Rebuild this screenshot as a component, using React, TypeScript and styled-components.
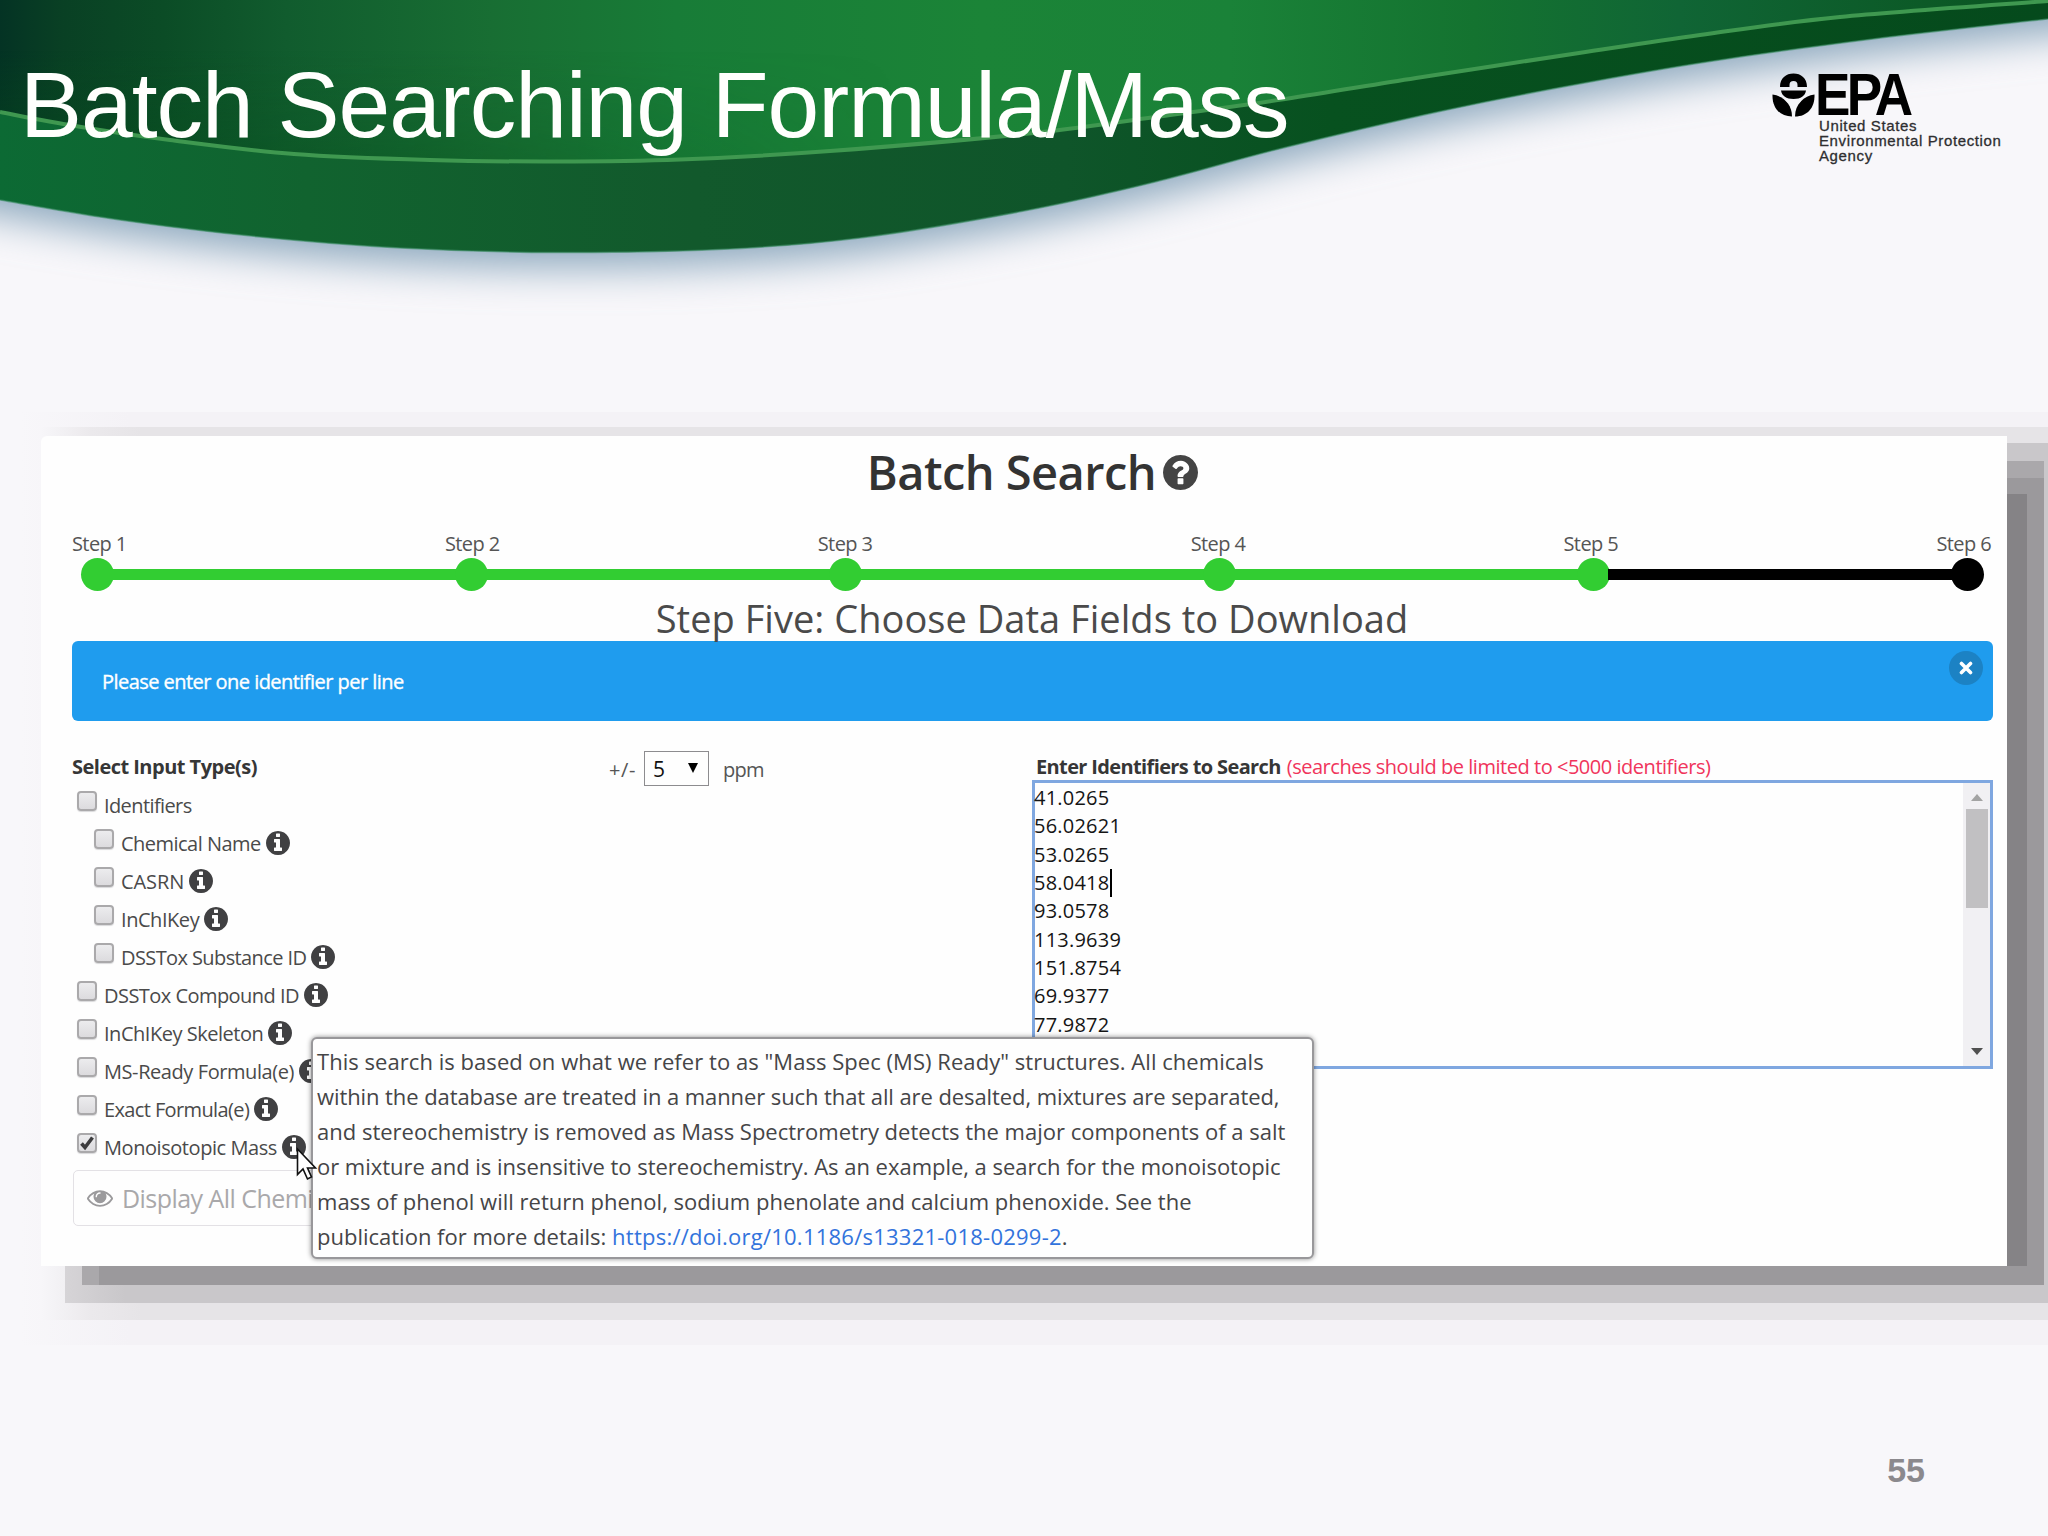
import React from "react";
import styled, { createGlobalStyle, css } from "styled-components";

const uiFont = '"Open Sans", "Noto Sans", sans-serif';
const slideFont = '"Liberation Sans", Arial, sans-serif';
const GREEN = "#32cd32";

const GlobalStyle = createGlobalStyle`
  html, body { margin: 0; padding: 0; background: #f8f7fa; }
  * { box-sizing: border-box; }
`;

const Slide = styled.main`
  position: relative;
  width: 2048px;
  height: 1536px;
  overflow: hidden;
  display: flex;
  flex-direction: column;
  background: #f8f7fa;
  font-family: ${uiFont};
  white-space: nowrap;
`;

/* ---------- header ---------- */

const Swoosh = styled.svg`
  position: absolute;
  inset: 0 auto auto 0;
  width: 2048px;
  height: 420px;
`;

const Header = styled.header`
  position: relative;
  flex: none;
  height: 436px;
  padding: 55px 46px 0 20px;
  display: flex;
  justify-content: space-between;
  align-items: flex-start;
`;

const Title = styled.h1`
  margin: 0;
  font: 400 93px/100px ${slideFont};
  letter-spacing: -1.03px;
  color: #fffffd;
`;

const Logo = styled.div`
  display: flex;
  align-items: flex-start;
  gap: 4px;
  padding-top: 18px;
  font-family: ${slideFont};
`;

const Flower = styled.svg`
  width: 43px;
  height: 44px;
`;

const LogoText = styled.div`
  display: flex;
  flex-direction: column;
  width: 183px;
`;

const Acronym = styled.div`
  margin: 0 0 2px -4px;
  height: 43px;
  font-size: 59px;
  font-weight: 700;
  line-height: 45px;
  letter-spacing: -4px;
  color: #000;
  transform: scaleX(0.9);
  transform-origin: left;
`;

const AgencyLine = styled.div`
  font-size: 15px;
  line-height: 15px;
  letter-spacing: 0.62px;
  color: #2e2e30;
  -webkit-text-stroke: 0.3px #2e2e30;
`;

/* ---------- panel and its stepped shadow ---------- */

const ShadowStep = styled.div<{ $l: number; $t: number; $r: number; $b: number; $c: string }>`
  position: absolute;
  left: ${(p) => p.$l}px;
  top: ${(p) => p.$t}px;
  width: ${(p) => p.$r - p.$l}px;
  height: ${(p) => p.$b - p.$t}px;
  background: ${(p) => p.$c};
`;

const Panel = styled.section`
  position: relative;
  flex: none;
  width: 1966px;
  height: 830px;
  margin-left: 41px;
  padding: 6px 14px 0 31px;
  border-top-left-radius: 6px;
  display: flex;
  flex-direction: column;
  background: #fefefe;
`;

const PanelTitle = styled.h2`
  margin: 0 0 28px;
  height: 60px;
  display: flex;
  justify-content: center;
  align-items: center;
  gap: 7px;
  font-size: 47px;
  font-weight: 600;
  line-height: 60px;
  letter-spacing: -0.55px;
  color: #333;
`;

const StepLabels = styled.div`
  display: flex;
  justify-content: space-between;
  height: 28px;
  padding: 0 2px 0 0;
  font-size: 20px;
  line-height: 28px;
  letter-spacing: -0.6px;
  color: #555;
`;

const Track = styled.div`
  display: flex;
  align-items: center;
  height: 33px;
  padding: 0 9px;
`;

const Dot = styled.i<{ $done: boolean }>`
  flex: none;
  width: 33px;
  height: 33px;
  border-radius: 50%;
  background: ${(p) => (p.$done ? GREEN : "#000")};
`;

const Bar = styled.i<{ $done: boolean }>`
  flex: 1;
  height: 11px;
  margin: 0 -2px;
  background: ${(p) => (p.$done ? GREEN : "#000")};
`;

const StepTitle = styled.h3`
  position: relative;
  z-index: 1;
  margin: 2px 1px 0 0;
  height: 48px;
  text-align: center;
  font-size: 38px;
  font-weight: 400;
  line-height: 50px;
  letter-spacing: 0.03px;
  color: #4a4a4a;
`;

const Alert = styled.div`
  flex: none;
  display: flex;
  align-items: center;
  justify-content: space-between;
  height: 80px;
  padding: 0 10px 0 30px;
  border-radius: 6px;
  background: #1f9cee;
  font-size: 20px;
  font-weight: 500;
  line-height: 28px;
  letter-spacing: -0.54px;
  color: #fff;
  -webkit-text-stroke: 0.35px #fff;
`;

const AlertText = styled.span`
  padding-top: 1px;
`;

const CloseButton = styled.button`
  width: 34px;
  height: 34px;
  margin-bottom: 27px;
  padding: 0;
  border: 0;
  border-radius: 50%;
  display: grid;
  place-items: center;
  background: #1c82c4;
`;

const Columns = styled.div`
  display: grid;
  grid-template-columns: 536px 424px 961px;
  align-items: start;
  margin-top: 31px;
`;

const GroupTitle = styled.h4<{ $ls: number }>`
  margin: 0;
  height: 28px;
  font-size: 20px;
  font-weight: 700;
  line-height: 30px;
  letter-spacing: ${(p) => p.$ls}px;
  color: #363636;
`;

const OptionList = styled.div`
  display: flex;
  flex-direction: column;
  margin: 6px 0 4px;
`;

const Option = styled.label<{ $indent?: boolean; $ls: number }>`
  display: flex;
  align-items: center;
  height: 38px;
  padding-left: ${(p) => (p.$indent ? 22 : 5)}px;
  font-size: 20px;
  line-height: 28px;
  letter-spacing: ${(p) => p.$ls}px;
  color: #4a4a4a;
`;

const OptionText = styled.span`
  padding-top: 2px;
`;

const Box = styled.span`
  width: 20px;
  height: 20px;
  margin: 0 7px 8px 0;
  display: grid;
  place-items: center;
  border: 2px solid #aaa9ab;
  border-radius: 4px;
  background: linear-gradient(#ececee, #dcdbde);
  box-shadow: 0 1px 1px #d9d9db;
`;

const InfoSvg = styled.svg`
  flex: none;
  width: 24px;
  height: 24px;
  margin-left: 5px;
`;

const DisplayButton = styled.button`
  display: flex;
  align-items: center;
  gap: 9px;
  width: 330px;
  height: 56px;
  margin-left: 1px;
  padding: 0 0 0 13px;
  border: 1px solid #e3e1e5;
  border-radius: 5px;
  background: #fefefe;
  font: 400 25px/54px ${uiFont};
  letter-spacing: -0.55px;
  color: #a9a8aa;
`;

const Tolerance = styled.div`
  display: flex;
  align-items: center;
  height: 37px;
  margin-top: -2px;
  font-size: 20px;
  line-height: 28px;
  letter-spacing: -0.8px;
  color: #555;
`;

const PlusMinus = styled.span`
  padding: 2px 8px 0 1px;
  letter-spacing: 0.6px;
`;

const SelectBox = styled.div`
  display: flex;
  align-items: center;
  justify-content: space-between;
  width: 65px;
  height: 35px;
  margin: 0 14px 0 0;
  padding: 1px 10px 0 8px;
  border: 1.5px solid #8d8c8f;
  font-size: 21px;
  color: #111;
`;

const SelectArrow = styled.i`
  margin-bottom: 3px;
  border: 5px solid transparent;
  border-top: 10px solid #000;
  border-bottom: 0;
`;

const Unit = styled.span`
  padding-top: 3px;
`;

const Limit = styled.span`
  margin-left: 6px;
  font-weight: 400;
  letter-spacing: -0.47px;
  color: #f0355c;
`;

const IdentifierTitle = styled(GroupTitle)`
  padding-left: 4px;
`;

const TextField = styled.div`
  display: flex;
  justify-content: space-between;
  height: 289px;
  border: 3px solid #7fa7e0;
  background: #fefefe;
`;

const Lines = styled.div`
  padding-top: 1px;
  margin-left: -1px;
  font-size: 20px;
  line-height: 28.33px;
  letter-spacing: 0.22px;
  color: #151515;
`;

const Caret = styled.span`
  display: inline-block;
  width: 2px;
  height: 28px;
  margin-left: 1px;
  vertical-align: top;
  background: #000;
`;

const Scrollbar = styled.div`
  display: flex;
  flex-direction: column;
  align-items: center;
  width: 27px;
  background: #f1f0f3;
`;

const Thumb = styled.i`
  width: 22px;
  height: 99px;
  margin: 8px 0 auto;
  background: #c1c0c2;
`;

const ScrollArrow = styled.i<{ $up?: boolean }>`
  border: 6px solid transparent;
  ${(p) =>
    p.$up
      ? css`
          margin-top: 11px;
          border-top: 0;
          border-bottom: 7px solid #a3a3a3;
        `
      : css`
          margin-bottom: 11px;
          border-bottom: 0;
          border-top: 7px solid #505050;
        `}
`;

/* ---------- tooltip and pointer ---------- */

const Tooltip = styled.div`
  position: absolute;
  left: 270px;
  top: 601px;
  width: 1003px;
  height: 222px;
  padding: 5px 0 0 4px;
  border: 2px solid #98979a;
  border-radius: 6px;
  background: #fefefe;
  box-shadow: 0 0 5px rgba(0, 0, 0, 0.45);
`;

const TooltipLine = styled.div<{ $ls: number }>`
  height: 35px;
  font-size: 22px;
  line-height: 35px;
  letter-spacing: ${(p) => p.$ls}px;
  color: #454547;
`;

const DoiLink = styled.a`
  letter-spacing: 0.24px;
  color: #3273dc;
`;

const Pointer = styled.svg`
  position: absolute;
  left: 255px;
  top: 711px;
  width: 22px;
  height: 34px;
`;

const Footer = styled.footer`
  position: relative;
  display: flex;
  justify-content: flex-end;
  padding: 184px 123px 0 0;
  font: 700 34px/40px ${slideFont};
  color: #8b898d;
`;

/* ---------- icons ---------- */

const DISC =
  "m640 416q0 209-103 385.5t-279.5 279.5-385.5 103-385.5-103-279.5-279.5-103-385.5 103-385.5 279.5-279.5 385.5-103 385.5 103 279.5 279.5 103 385.5z";

const InfoIcon = () => (
  <InfoSvg viewBox="0 128 1536 1536" fill="#404042">
    <path
      d={
        "M1024 1376v-160q0-14-9-23t-23-9h-96v-512q0-14-9-23t-23-9h-320q-14 0-23 9t-9 23v160q0 14 9 23t23 9h96v320h-96q-14 0-23 9t-9 23v160q0 14 9 23t23 9h448q14 0 23-9t9-23zm-128-896v-160q0-14-9-23t-23-9h-192q-14 0-23 9t-9 23v160q0 14 9 23t23 9h192q14 0 23-9t9-23z" +
        DISC
      }
    />
  </InfoSvg>
);

const QuestionIcon = () => (
  <svg width="35" height="35" viewBox="0 128 1536 1536" fill="#444">
    <path d="M896 1376v-192q0-14-9-23t-23-9h-192q-14 0-23 9t-9 23v192q0 14 9 23t23 9h192q14 0 23-9t9-23zm256-672q0-88-55.5-163t-138.5-116-170-41q-243 0-371 213-15 24 8 42l132 100q7 6 19 6 16 0 25-12 53-68 86-92 34-24 86-24 48 0 85.5 26t37.5 59q0 38-20 61t-68 45q-63 28-115.5 86.5t-52.5 125.5v36q0 14 9 23t23 9h192q14 0 23-9t9-23q0-19 21.5-49.5t54.5-49.5q32-18 49-28.5t46-35 44.5-48 28-60.5 12.5-81zm384 192q0 209-103 385.5t-279.5 279.5-385.5 103-385.5-103-279.5-279.5-103-385.5 103-385.5 279.5-279.5 385.5-103 385.5 103 279.5 279.5 103 385.5z" />
  </svg>
);

const EyeIcon = () => (
  <svg width="26" height="17" viewBox="0 384 1792 1152" fill="#9b9a9c">
    <path d="M1664 960q-152-236-381-353 61 104 61 225 0 185-131.5 316.5t-316.5 131.5-316.5-131.5-131.5-316.5q0-121 61-225-229 117-381 353 133 205 333.5 326.5t434.5 121.5 434.5-121.5 333.5-326.5zm-720-384q0-20-14-34t-34-14q-125 0-214.5 89.5t-89.5 214.5q0 20 14 34t34 14 34-14 14-34q0-86 61-147t147-61q20 0 34-14t14-34zm848 384q0 34-20 69-140 230-376.5 368.5t-499.5 138.5-499.5-139-376.5-368q-20-35-20-69t20-69q140-229 376.5-368t499.5-139 499.5 139 376.5 368q20 35 20 69z" />
  </svg>
);

type Point = [number, number];

/* Smooth curve through a list of points (Catmull-Rom as cubic segments). */
const curve = (pts: Point[]) =>
  pts.slice(1).reduce((d, p, i) => {
    const a = pts[Math.max(0, i - 1)];
    const b = pts[i];
    const n = pts[Math.min(pts.length - 1, i + 2)];
    const c1 = [b[0] + (p[0] - a[0]) / 6, b[1] + (p[1] - a[1]) / 6];
    const c2 = [p[0] - (n[0] - b[0]) / 6, p[1] - (n[1] - b[1]) / 6];
    return `${d}C${c1[0]} ${c1[1]} ${c2[0]} ${c2[1]} ${p[0]} ${p[1]}`;
  }, `M${pts[0][0]} ${pts[0][1]}`);

const OUTER = curve([
  [0, 200], [120, 220], [260, 237], [400, 248], [555, 252.5], [718, 249.5],
  [860, 238], [1024, 211], [1155, 182], [1285, 147.5], [1442, 111],
  [1579, 84], [1710, 61.5], [1873, 39], [2048, 19],
]);

const INNER = curve([
  [0, 112], [75, 126], [170, 140], [294, 154], [430, 160], [555, 161.5],
  [680, 159.5], [830, 151], [1024, 134], [1155, 117], [1285, 99],
  [1416, 78], [1579, 53], [1700, 35], [1840, 17], [2048, 1],
]);

const HeaderArt = () => (
  <Swoosh viewBox="0 0 2048 420">
    <defs>
      <linearGradient id="top" gradientUnits="userSpaceOnUse" x1="0" x2="2048" y1="0" y2="0">
        <stop offset="0" stopColor="#043324" />
        <stop offset="0.03" stopColor="#094024" />
        <stop offset="0.08" stopColor="#0b4c26" />
        <stop offset="0.14" stopColor="#115c2e" />
        <stop offset="0.24" stopColor="#186e33" />
        <stop offset="0.33" stopColor="#187c37" />
        <stop offset="0.48" stopColor="#1b8437" />
        <stop offset="0.6" stopColor="#1a8238" />
        <stop offset="0.72" stopColor="#147330" />
        <stop offset="0.82" stopColor="#106535" />
        <stop offset="1" stopColor="#0a5420" />
      </linearGradient>
      <linearGradient id="shade" gradientUnits="userSpaceOnUse" x1="0" x2="0" y1="50" y2="162">
        <stop offset="0" stopColor="#04501a" stopOpacity="0" />
        <stop offset="1" stopColor="#04501a" stopOpacity="0.4" />
      </linearGradient>
      <linearGradient id="band" gradientUnits="userSpaceOnUse" x1="0" x2="2048" y1="0" y2="0">
        <stop offset="0" stopColor="#0c6a34" />
        <stop offset="0.15" stopColor="#11632f" />
        <stop offset="0.34" stopColor="#12592c" />
        <stop offset="0.52" stopColor="#0f552a" />
        <stop offset="0.65" stopColor="#07511f" />
        <stop offset="1" stopColor="#054a1c" />
      </linearGradient>
      <linearGradient id="fade" gradientUnits="userSpaceOnUse" x1="0" x2="900" y1="0" y2="0">
        <stop offset="0" stopColor="#fff" stopOpacity="1" />
        <stop offset="0.5" stopColor="#fff" stopOpacity="0.7" />
        <stop offset="1" stopColor="#fff" stopOpacity="0" />
      </linearGradient>
      <mask id="left">
        <rect width="2048" height="420" fill="url(#fade)" />
      </mask>
      <filter id="soft" x="-5%" y="-20%" width="110%" height="170%">
        <feGaussianBlur stdDeviation="20" />
      </filter>
    </defs>
    <path d={OUTER + "L2148 10V-60H-100V180Z"} transform="translate(0 15)" fill="#8ba7bd" filter="url(#soft)" />
    <path d={OUTER + "V0H0Z"} fill="url(#band)" />
    <path d={INNER + "V0H0Z"} fill="url(#top)" />
    <path d={INNER + "V0H0Z"} fill="url(#shade)" mask="url(#left)" />
    <path d={INNER} fill="none" stroke="#3f9850" strokeWidth="4" />
    <path d={OUTER} fill="none" stroke="#3f8f68" strokeOpacity="0.6" strokeWidth="1.5" />
  </Swoosh>
);

const EpaFlower = () => (
  <Flower viewBox="0 0 43 44">
    <path d="M8 14C8 5 14 .5 21.500 .5C29 .5 35 5 35 14H25.500V12A3.500 3.500 0 1 0 17.500 12V14Z" fill="#000" />
    <path d="M9 17.500H34C33 23 29 26 21.500 26C14 26 10 23 9 17.500Z" fill="#000" />
    <path d="M.5 21.500C11 23 20 31 20 43.500C8 43.500 0 35 .5 21.500Z" fill="#000" />
    <path d="M42.500 21.500C32 23 23 31 23 43.500C35 43.500 43 35 42.500 21.500Z" fill="#000" />
    <path d="M21.500 44V33.500L14.500 27M21.500 33.500L28.500 27" stroke="#f4f6f8" strokeWidth="2" fill="none" />
  </Flower>
);

/* ---------- data ---------- */

const STEPS = [1, 2, 3, 4, 5, 6];

const OPTIONS = [
  { label: "Identifiers", ls: -0.6, plain: true },
  { label: "Chemical Name", ls: -0.52, indent: true },
  { label: "CASRN", ls: -0.1, indent: true },
  { label: "InChIKey", ls: -0.45, indent: true },
  { label: "DSSTox Substance ID", ls: -0.6, indent: true },
  { label: "DSSTox Compound ID", ls: -0.54 },
  { label: "InChIKey Skeleton", ls: -0.48 },
  { label: "MS-Ready Formula(e)", ls: -0.42 },
  { label: "Exact Formula(e)", ls: -0.62 },
  { label: "Monoisotopic Mass", ls: -0.44, checked: true },
];

const MASSES = [
  "41.0265", "56.02621", "53.0265", "58.0418", "93.0578",
  "113.9639", "151.8754", "69.9377", "77.9872",
];

const TOOLTIP = [
  { text: 'This search is based on what we refer to as "Mass Spec (MS) Ready" structures. All chemicals', ls: 0.045 },
  { text: "within the database are treated in a manner such that all are desalted, mixtures are separated,", ls: -0.085 },
  { text: "and stereochemistry is removed as Mass Spectrometry detects the major components of a salt", ls: 0 },
  { text: "or mixture and is insensitive to stereochemistry. As an example, a search for the monoisotopic", ls: -0.025 },
  { text: "mass of phenol will return phenol, sodium phenolate and calcium phenoxide. See the", ls: 0.01 },
];

/* left, top, right, bottom, fill: from the outermost step inwards */
const SHADOW: [number, number, number, number, string][] = [
  [20, 412, 2048, 1345, "linear-gradient(90deg, #f8f7fa 0, #f4f2f6 110px)"],
  [41, 427, 2048, 1320, "linear-gradient(90deg, #f7f6f9 0, #ebe9ec 50px, #e6e4e7 100px)"],
  [65, 443, 2048, 1303, "linear-gradient(90deg, #d6d4d7 0, #c9c7ca 60px)"],
  [82, 461, 2044, 1285, "#aaa8ab"],
  [99, 478, 2044, 1285, "#9b999c"],
  [115, 494, 2027, 1266, "#858386"],
];

export default function App() {
  return (
    <Slide>
      <GlobalStyle />
      <HeaderArt />
      {SHADOW.map(([l, t, r, b, c]) => (
        <ShadowStep key={l} $l={l} $t={t} $r={r} $b={b} $c={c} />
      ))}
      <Header>
        <Title>Batch Searching Formula/Mass</Title>
        <Logo>
          <EpaFlower />
          <LogoText>
            <Acronym>EPA</Acronym>
            <AgencyLine>United States</AgencyLine>
            <AgencyLine>Environmental Protection</AgencyLine>
            <AgencyLine>Agency</AgencyLine>
          </LogoText>
        </Logo>
      </Header>

      <Panel>
        <PanelTitle>
          Batch Search
          <QuestionIcon />
        </PanelTitle>
        <StepLabels>
          {STEPS.map((n) => (
            <span key={n}>Step {n}</span>
          ))}
        </StepLabels>
        <Track>
          {STEPS.map((n) => (
            <React.Fragment key={n}>
              {n > 1 && <Bar $done={n < 6} />}
              <Dot $done={n < 6} />
            </React.Fragment>
          ))}
        </Track>
        <StepTitle>Step Five: Choose Data Fields to Download</StepTitle>
        <Alert>
          <AlertText>Please enter one identifier per line</AlertText>
          <CloseButton aria-label="Close">
            <svg width="14" height="14" viewBox="0 0 14 14">
              <path d="M2.500 2.500L11.500 11.500M11.500 2.500L2.500 11.500" stroke="#fff" strokeWidth="3.600" strokeLinecap="round" />
            </svg>
          </CloseButton>
        </Alert>

        <Columns>
          <div>
            <GroupTitle $ls={-0.52}>Select Input Type(s)</GroupTitle>
            <OptionList>
              {OPTIONS.map((o) => (
                <Option key={o.label} $indent={o.indent} $ls={o.ls}>
                  <Box>
                    {o.checked && (
                      <svg width="16" height="16" viewBox="0 0 16 16">
                        <path d="M2.500 8.500L6 12.500L13.500 2.500" stroke="#3c3c3e" strokeWidth="3.600" fill="none" />
                      </svg>
                    )}
                  </Box>
                  <OptionText>{o.label}</OptionText>
                  {!o.plain && <InfoIcon />}
                </Option>
              ))}
            </OptionList>
            <DisplayButton>
              <EyeIcon />
              Display All Chemicals
            </DisplayButton>
          </div>
          <Tolerance>
            <PlusMinus>+/-</PlusMinus>
            <SelectBox>
              5<SelectArrow />
            </SelectBox>
            <Unit>ppm</Unit>
          </Tolerance>
          <div>
            <IdentifierTitle $ls={-0.63}>
              Enter Identifiers to Search
              <Limit>(searches should be limited to &lt;5000 identifiers)</Limit>
            </IdentifierTitle>
            <TextField>
              <Lines>
                {MASSES.map((m) => (
                  <div key={m}>
                    {m}
                    {m === "58.0418" && <Caret />}
                  </div>
                ))}
              </Lines>
              <Scrollbar>
                <ScrollArrow $up />
                <Thumb />
                <ScrollArrow />
              </Scrollbar>
            </TextField>
          </div>
        </Columns>

        <Tooltip>
          {TOOLTIP.map((t) => (
            <TooltipLine key={t.text} $ls={t.ls}>
              {t.text}
            </TooltipLine>
          ))}
          <TooltipLine $ls={0}>
            publication for more details: <DoiLink>https://doi.org/10.1186/s13321-018-0299-2</DoiLink>.
          </TooltipLine>
        </Tooltip>
        <Pointer viewBox="0 0 22 34">
          <path d="M1.500 2V27.500L7 22L11.500 32L15.500 30L11.500 21H19.500Z" fill="#fff" stroke="#111" strokeWidth="1.600" />
        </Pointer>
      </Panel>

      <Footer>55</Footer>
    </Slide>
  );
}
